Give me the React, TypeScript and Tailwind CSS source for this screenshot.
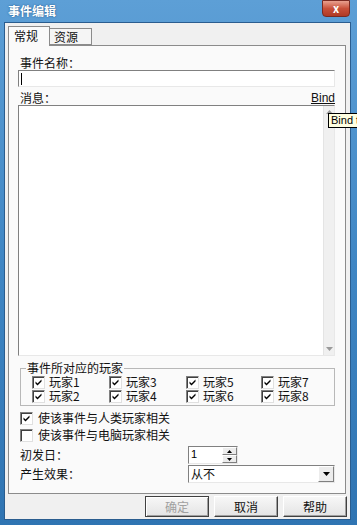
import React from "react";

const font = { fontFamily: '"Noto Sans CJK SC", "Liberation Sans", sans-serif' };

function Check({ checked }: { checked: boolean }) {
  return (
    <span className="relative inline-block w-[13px] h-[13px] shrink-0 bg-white border border-t-[#808080] border-l-[#808080] border-r-[#e0e0e0] border-b-[#e0e0e0] shadow-[inset_1px_1px_0_#404040]">
      {checked && (
        <svg viewBox="0 0 11 11" className="absolute left-0 top-0 w-[11px] h-[11px]">
          <path d="M2.5 4.5 L4.5 6.5 L8.5 2.5 L8.5 4.5 L4.5 8.5 L2.5 6.5 Z" fill="#000" />
        </svg>
      )}
    </span>
  );
}

function Player({ n }: { n: number }) {
  return (
    <div className="flex items-center gap-[4px] h-[14px]">
      <Check checked />
      <span className="text-[12px] leading-[14px] text-[#111]">玩家{n}</span>
    </div>
  );
}

function Button({ label, disabled }: { label: string; disabled?: boolean }) {
  return (
    <div
      className={
        "w-[64px] h-[21px] flex items-center justify-center text-[12px] leading-[14px] bg-gradient-to-b from-[#f7f7f7] to-[#e4e4e4] " +
        (disabled
          ? "text-[#a0a0a0] border border-[#404040] shadow-[inset_1px_1px_0_#fff,inset_-1px_-1px_0_#a0a0a0]"
          : "text-[#111] border border-t-[#fff] border-l-[#fff] border-r-[#404040] border-b-[#404040] shadow-[inset_-1px_-1px_0_#a0a0a0]")
      }
    >
      {label}
    </div>
  );
}

export default function App() {
  return (
    <div className="relative w-[357px] h-[525px] overflow-hidden bg-gradient-to-b from-[#5d9fd6] via-[#3f86c4] to-[#2f74b2] flex flex-col" style={font}>
      {/* title bar */}
      <div className="h-[22px] flex items-start justify-between pl-[8px] pr-[7px] shrink-0">
        <span className="mt-[4px] text-[12px] font-bold text-white leading-[14px] [text-shadow:0_0_2px_#1c4f80]">事件编辑</span>
        <div className="w-[28px] h-[17px] rounded-b-[4px] border border-[#7a2a22] bg-gradient-to-b from-[#e8a08f] via-[#c8503a] to-[#b03a25] flex items-center justify-center">
          <span className="text-white text-[11px] font-bold leading-none">x</span>
        </div>
      </div>

      {/* client */}
      <div className="flex-1 ml-[4px] mr-[6px] mb-[5px] bg-[#f0f0f0] border border-[#2a5d8f] flex flex-col px-[3px] pt-[3px]">
        {/* tabs */}
        <div className="flex items-end h-[19px] relative z-10">
          <div className="w-[42px] h-[20px] -mb-[1px] bg-[#fafafa] border border-[#8b8b8b] border-b-0 text-[12px] text-[#111] pl-[5px] leading-[18px]">常规</div>
          <div className="w-[42px] h-[17px] bg-[#f5f5f5] border border-[#8b8b8b] border-l-0 text-[12px] text-[#111] pl-[4px] leading-[16px]">资源</div>
        </div>
        <div className="h-[449px] mr-[1px] bg-[#fafafa] border border-[#8b8b8b] flex flex-col pl-[9px] pr-[10px] pt-[10px]">
          <div className="h-[14px] text-[12px] leading-[14px] text-[#111] pl-[2px]">事件名称：</div>
          <div className="h-[17px] bg-white border border-t-[#808080] border-l-[#808080] border-r-[#e8e8e8] border-b-[#e8e8e8] flex items-center pl-[2px]">
            <span className="w-px h-[12px] bg-black" />
          </div>
          <div className="mt-[4px] h-[14px] flex justify-between text-[12px] leading-[14px] text-[#111]">
            <span className="pl-[2px]">消息：</span>
            <span className="underline text-[12px]" style={{ fontFamily: '"Liberation Sans", sans-serif' }}>Bind</span>
          </div>
          <div className="h-[251px] bg-white border border-t-[#808080] border-l-[#808080] border-r-[#e8e8e8] border-b-[#e8e8e8] flex justify-end">
            <div className="w-[11px] h-full bg-[#f0f0f0] border-l border-[#e4e4e4] flex flex-col justify-between items-center py-[4px]">
              <svg width="7" height="4" viewBox="0 0 7 4"><path d="M0 4 L3.5 0 L7 4 Z" fill="#9a9a9a" /></svg>
              <svg width="7" height="4" viewBox="0 0 7 4"><path d="M0 0 L7 0 L3.5 4 Z" fill="#9a9a9a" /></svg>
            </div>
          </div>

          {/* group */}
          <div className="mt-[6px] relative h-[44px] pl-[2px]">
            <div className="absolute left-[2px] right-0 top-[6px] bottom-0 border border-[#b8b8b8]" />
            <span className="absolute left-[8px] top-0 bg-[#fafafa] px-[1px] text-[12px] leading-[12px] text-[#111]">事件所对应的玩家</span>
            <div className="relative pt-[13px] pl-[12px] grid grid-cols-[77px_77px_75px_77px]">
              <Player n={1} />
              <Player n={3} />
              <Player n={5} />
              <Player n={7} />
              <Player n={2} />
              <Player n={4} />
              <Player n={6} />
              <Player n={8} />
            </div>
          </div>

          <div className="mt-[5px] flex items-center gap-[5px] h-[14px] pl-[2px]">
            <Check checked />
            <span className="text-[12px] leading-[14px] text-[#111]">使该事件与人类玩家相关</span>
          </div>
          <div className="mt-[3px] flex items-center gap-[5px] h-[14px] pl-[2px]">
            <Check checked={false} />
            <span className="text-[12px] leading-[14px] text-[#111]">使该事件与电脑玩家相关</span>
          </div>

          <div className="mt-[4px] flex items-center h-[18px]">
            <span className="w-[170px] pl-[2px] text-[12px] leading-[14px] text-[#111]">初发日：</span>
            <div className="w-[50px] h-[18px] bg-white border border-t-[#808080] border-l-[#808080] border-r-[#e8e8e8] border-b-[#e8e8e8] flex justify-between">
              <span className="pl-[2px] text-[11px] leading-[15px]" style={{ fontFamily: '"Liberation Sans", sans-serif' }}>1</span>
              <div className="w-[15px] flex flex-col">
                <div className="flex-1 bg-[#ececec] border border-t-white border-l-white border-r-[#808080] border-b-[#808080] flex items-center justify-center">
                  <svg width="5" height="3" viewBox="0 0 5 3"><path d="M0 3 L2.5 0 L5 3 Z" fill="#000" /></svg>
                </div>
                <div className="flex-1 bg-[#ececec] border border-t-white border-l-white border-r-[#808080] border-b-[#808080] flex items-center justify-center">
                  <svg width="5" height="3" viewBox="0 0 5 3"><path d="M0 0 L5 0 L2.5 3 Z" fill="#000" /></svg>
                </div>
              </div>
            </div>
          </div>
          <div className="mt-[1px] flex items-center h-[18px]">
            <span className="w-[170px] pl-[2px] text-[12px] leading-[14px] text-[#111]">产生效果：</span>
            <div className="flex-1 h-[18px] bg-white border border-t-[#808080] border-l-[#808080] border-r-[#e8e8e8] border-b-[#e8e8e8] flex justify-between">
              <span className="pl-[2px] text-[12px] leading-[15px] text-[#111]">从不</span>
              <div className="w-[16px] bg-[#ececec] border border-t-white border-l-white border-r-[#808080] border-b-[#808080] flex items-center justify-center">
                <svg width="7" height="4" viewBox="0 0 7 4"><path d="M0 0 L7 0 L3.5 4 Z" fill="#000" /></svg>
              </div>
            </div>
          </div>
        </div>

        {/* buttons */}
        <div className="mt-[2px] flex justify-end gap-[5px]">
          <Button label="确定" disabled />
          <Button label="取消" />
          <Button label="帮助" />
        </div>
      </div>

      {/* tooltip, runs past the window edge */}
      <div className="absolute left-[328px] top-[113px] h-[15px] w-[29px] overflow-hidden pl-[2px] bg-[#ffffe1] border border-r-0 border-[#000] text-[11px] leading-[13px] text-black whitespace-nowrap" style={{ fontFamily: '"Liberation Sans", sans-serif' }}>
        Bind to
      </div>
    </div>
  );
}
